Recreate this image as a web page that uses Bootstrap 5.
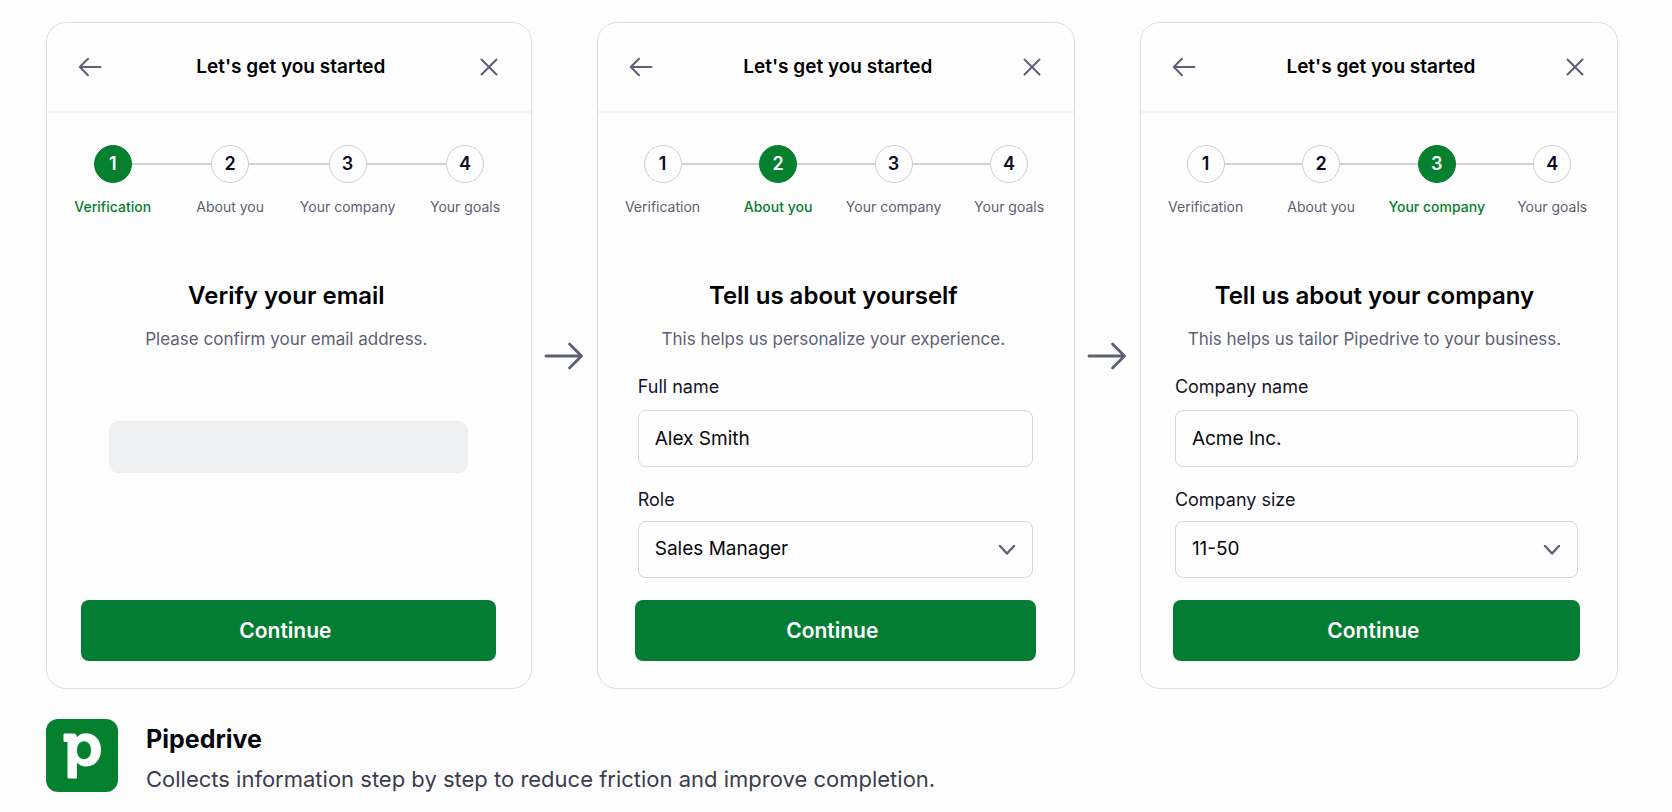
<!DOCTYPE html>
<html lang="en">
<head>
<meta charset="utf-8">
<meta name="viewport" content="width=device-width, initial-scale=1">
<title>Pipedrive onboarding</title>
<link rel="stylesheet" href="https://cdn.jsdelivr.net/npm/bootstrap@5.3.0/dist/css/bootstrap.min.css">
<style>
  :root { --green: #037d34; --slate: #5d6075; }
  body { background: #fdfdfd; color: #05060f; font-family: Inter, "Liberation Sans", sans-serif; }
  .flow { padding: 22px 54px 0 46px; }
  .flow-arrow { flex: 0 0 65px; color: var(--slate); }
  .panel { flex: 1 1 0; min-width: 0; min-height: 667px; border: 1px solid #dddde0; border-radius: 20px; background: #fefefe; --inset-start: 37px; --inset-end: 38px; --nudge: 3px; }
  .panel-first { flex-grow: 1.016; --inset-start: 34px; --inset-end: 35px; }
  .panel-last { --inset-start: 32px; --inset-end: 37px; --nudge: 2px; }
  .panel-head { height: 90px; padding: 0 33px 0 31px; border-bottom: 2px solid #f3f3f4; }
  .panel-title { font-size: 19px; line-height: 24px; font-weight: 600; color: #000; }
  .icon-btn { color: var(--slate); line-height: 0; }
  .steps { padding: 32px 7px 0; }
  .step { flex: 1 1 0; position: relative; font-size: 14px; line-height: 20px; color: var(--slate); white-space: nowrap; }
  .step + .step::before { content: ""; position: absolute; top: 18px; left: calc(19px - 50%); right: calc(50% + 19px); height: 2px; background: #cfcfd6; }
  .dot { width: 38px; height: 38px; border: 1px solid #cdcdd2; border-radius: 50%; font-size: 18px; font-weight: 600; color: #0c0b22; margin-bottom: 14px; }
  .step.current { color: #04802f; font-weight: 500; }
  .step.current .dot { background: #04802f; border-color: #04802f; color: #fff; }
  .lead-title { font-size: 24px; line-height: 32px; font-weight: 600; color: #000; margin-top: 63px; padding-right: 4px; }
  .lead-text { font-size: 17px; line-height: 24px; color: var(--slate); margin-top: 15px; padding-right: 4px; }
  .panel-body { padding: 0 var(--inset-end) 27px var(--inset-start); }
  .fields { padding: 0 var(--nudge); margin-top: 24px; }
  .fields label { font-size: 18px; line-height: 24px; color: #141427; margin-bottom: 11px; }
  .field { height: 57px; font-size: 19px; padding: 0 16px; border: 1px solid #d6d6da; border-radius: 8px; background-color: #fefefe; color: #08080c; }
  .field-group + .field-group { margin-top: 21px; }
  .field-group + .field-group label { margin-bottom: 9px; }
  .chevron { position: absolute; right: 17px; top: 23px; color: var(--slate); pointer-events: none; }
  select.field { appearance: none; }
  .skeleton { height: 52px; border-radius: 9px; background: #eff0f1; margin: 70px 28px 0; }
  .btn-continue, .btn-continue:hover { height: 61px; padding: 0 18px 0 12px; border: 0; border-radius: 8px; background: var(--green); color: #fff; font-size: 21px; font-weight: 600; }
  .brand { padding: 30px 46px 18px; gap: 28px; }
  .brand-name { font-size: 25px; line-height: 32px; font-weight: 700; margin-bottom: 8px; }
  .brand-text { font-size: 22px; line-height: 32px; color: #3b3c50; }
</style>
</head>
<body>
<svg class="d-none" aria-hidden="true">
  <symbol id="back" viewBox="0 0 24 20"><path d="M22.500 10H2M10 1.800 1.800 10 10 18.200" fill="none" stroke="currentColor" stroke-width="2" stroke-linecap="round" stroke-linejoin="round"/></symbol>
  <symbol id="close" viewBox="0 0 18 18"><path d="M1.500 1.500l15 15M16.500 1.500l-15 15" fill="none" stroke="currentColor" stroke-width="2" stroke-linecap="round"/></symbol>
  <symbol id="next" viewBox="0 0 40 28"><path d="M2 14H37M25.500 2 37.500 14 25.500 26" fill="none" stroke="currentColor" stroke-width="2.800" stroke-linecap="round" stroke-linejoin="round"/></symbol>
  <symbol id="down" viewBox="0 0 18 12"><path d="M2 2l7 7.500L16 2" fill="none" stroke="currentColor" stroke-width="2.400" stroke-linecap="round" stroke-linejoin="round"/></symbol>
</svg>

<main class="flow d-flex">
  <section class="panel panel-first d-flex flex-column">
    <header class="panel-head d-flex align-items-center justify-content-between">
      <button type="button" class="btn p-0 border-0 icon-btn" aria-label="Back"><svg width="24" height="20"><use href="#back"/></svg></button>
      <h2 class="panel-title m-0">Let's get you started</h2>
      <button type="button" class="btn p-0 border-0 icon-btn" aria-label="Close"><svg width="18" height="18"><use href="#close"/></svg></button>
    </header>
    <ol class="steps list-unstyled d-flex m-0 text-center">
      <li class="step current" aria-current="step"><div class="dot d-flex align-items-center justify-content-center mx-auto">1</div>Verification</li>
      <li class="step"><div class="dot d-flex align-items-center justify-content-center mx-auto">2</div>About you</li>
      <li class="step"><div class="dot d-flex align-items-center justify-content-center mx-auto">3</div>Your company</li>
      <li class="step"><div class="dot d-flex align-items-center justify-content-center mx-auto">4</div>Your goals</li>
    </ol>
    <form class="panel-body d-flex flex-column flex-grow-1">
      <h3 class="lead-title text-center mb-0">Verify your email</h3>
      <p class="lead-text text-center mb-0">Please confirm your email address.</p>
      <div class="skeleton"></div>
      <button type="button" class="btn btn-continue w-100 mt-auto">Continue</button>
    </form>
  </section>

  <div class="flow-arrow d-flex align-items-center justify-content-center"><svg width="40" height="28" aria-hidden="true"><use href="#next"/></svg></div>

  <section class="panel d-flex flex-column">
    <header class="panel-head d-flex align-items-center justify-content-between">
      <button type="button" class="btn p-0 border-0 icon-btn" aria-label="Back"><svg width="24" height="20"><use href="#back"/></svg></button>
      <h2 class="panel-title m-0">Let's get you started</h2>
      <button type="button" class="btn p-0 border-0 icon-btn" aria-label="Close"><svg width="18" height="18"><use href="#close"/></svg></button>
    </header>
    <ol class="steps list-unstyled d-flex m-0 text-center">
      <li class="step"><div class="dot d-flex align-items-center justify-content-center mx-auto">1</div>Verification</li>
      <li class="step current" aria-current="step"><div class="dot d-flex align-items-center justify-content-center mx-auto">2</div>About you</li>
      <li class="step"><div class="dot d-flex align-items-center justify-content-center mx-auto">3</div>Your company</li>
      <li class="step"><div class="dot d-flex align-items-center justify-content-center mx-auto">4</div>Your goals</li>
    </ol>
    <form class="panel-body d-flex flex-column flex-grow-1">
      <h3 class="lead-title text-center mb-0">Tell us about yourself</h3>
      <p class="lead-text text-center mb-0">This helps us personalize your experience.</p>
      <div class="fields">
        <div class="field-group">
          <label class="d-block" for="full-name">Full name</label>
          <input class="form-control field" id="full-name" type="text" value="Alex Smith">
        </div>
        <div class="field-group">
          <label class="d-block" for="role">Role</label>
          <div class="position-relative">
            <select class="form-control field" id="role"><option>Sales Manager</option></select>
            <svg class="chevron" width="18" height="12" aria-hidden="true"><use href="#down"/></svg>
          </div>
        </div>
      </div>
      <button type="button" class="btn btn-continue w-100 mt-auto">Continue</button>
    </form>
  </section>

  <div class="flow-arrow d-flex align-items-center justify-content-center"><svg width="40" height="28" aria-hidden="true"><use href="#next"/></svg></div>

  <section class="panel panel-last d-flex flex-column">
    <header class="panel-head d-flex align-items-center justify-content-between">
      <button type="button" class="btn p-0 border-0 icon-btn" aria-label="Back"><svg width="24" height="20"><use href="#back"/></svg></button>
      <h2 class="panel-title m-0">Let's get you started</h2>
      <button type="button" class="btn p-0 border-0 icon-btn" aria-label="Close"><svg width="18" height="18"><use href="#close"/></svg></button>
    </header>
    <ol class="steps list-unstyled d-flex m-0 text-center">
      <li class="step"><div class="dot d-flex align-items-center justify-content-center mx-auto">1</div>Verification</li>
      <li class="step"><div class="dot d-flex align-items-center justify-content-center mx-auto">2</div>About you</li>
      <li class="step current" aria-current="step"><div class="dot d-flex align-items-center justify-content-center mx-auto">3</div>Your company</li>
      <li class="step"><div class="dot d-flex align-items-center justify-content-center mx-auto">4</div>Your goals</li>
    </ol>
    <form class="panel-body d-flex flex-column flex-grow-1">
      <h3 class="lead-title text-center mb-0">Tell us about your company</h3>
      <p class="lead-text text-center mb-0">This helps us tailor Pipedrive to your business.</p>
      <div class="fields">
        <div class="field-group">
          <label class="d-block" for="company-name">Company name</label>
          <input class="form-control field" id="company-name" type="text" value="Acme Inc.">
        </div>
        <div class="field-group">
          <label class="d-block" for="company-size">Company size</label>
          <div class="position-relative">
            <select class="form-control field" id="company-size"><option>11-50</option></select>
            <svg class="chevron" width="18" height="12" aria-hidden="true"><use href="#down"/></svg>
          </div>
        </div>
      </div>
      <button type="button" class="btn btn-continue w-100 mt-auto">Continue</button>
    </form>
  </section>
</main>

<footer class="brand d-flex align-items-start">
  <svg width="72" height="73" viewBox="0 0 72 73" role="img" aria-label="Pipedrive logo">
    <rect width="72" height="73" rx="12" fill="#04802f"/>
    <path d="M18.500 14.500H28Q30.500 14.500 31 18V58.500Q31 59.500 30 59.500H22.500Q21.500 59.500 21.500 58.500V23H18.500Q17.500 23 17.500 22V15.500Q17.500 14.500 18.500 14.500Z" fill="#fff"/>
    <path fill-rule="evenodd" d="M40 14.300c9 0 15 7 15 16.500S49 47.500 40 47.500 27 40 27 31 31 14.300 40 14.300ZM38 22.300c-4.200 0-7 3.600-7 8.900s2.800 8.900 7 8.900 7-3.600 7-8.900-2.800-8.900-7-8.900Z" fill="#fff"/>
  </svg>
  <div>
    <h1 class="brand-name mt-1">Pipedrive</h1>
    <p class="brand-text mb-0">Collects information step by step to reduce friction and improve completion.</p>
  </div>
</footer>
<script src="https://cdn.jsdelivr.net/npm/bootstrap@5.3.0/dist/js/bootstrap.bundle.min.js"></script>
</body>
</html>
